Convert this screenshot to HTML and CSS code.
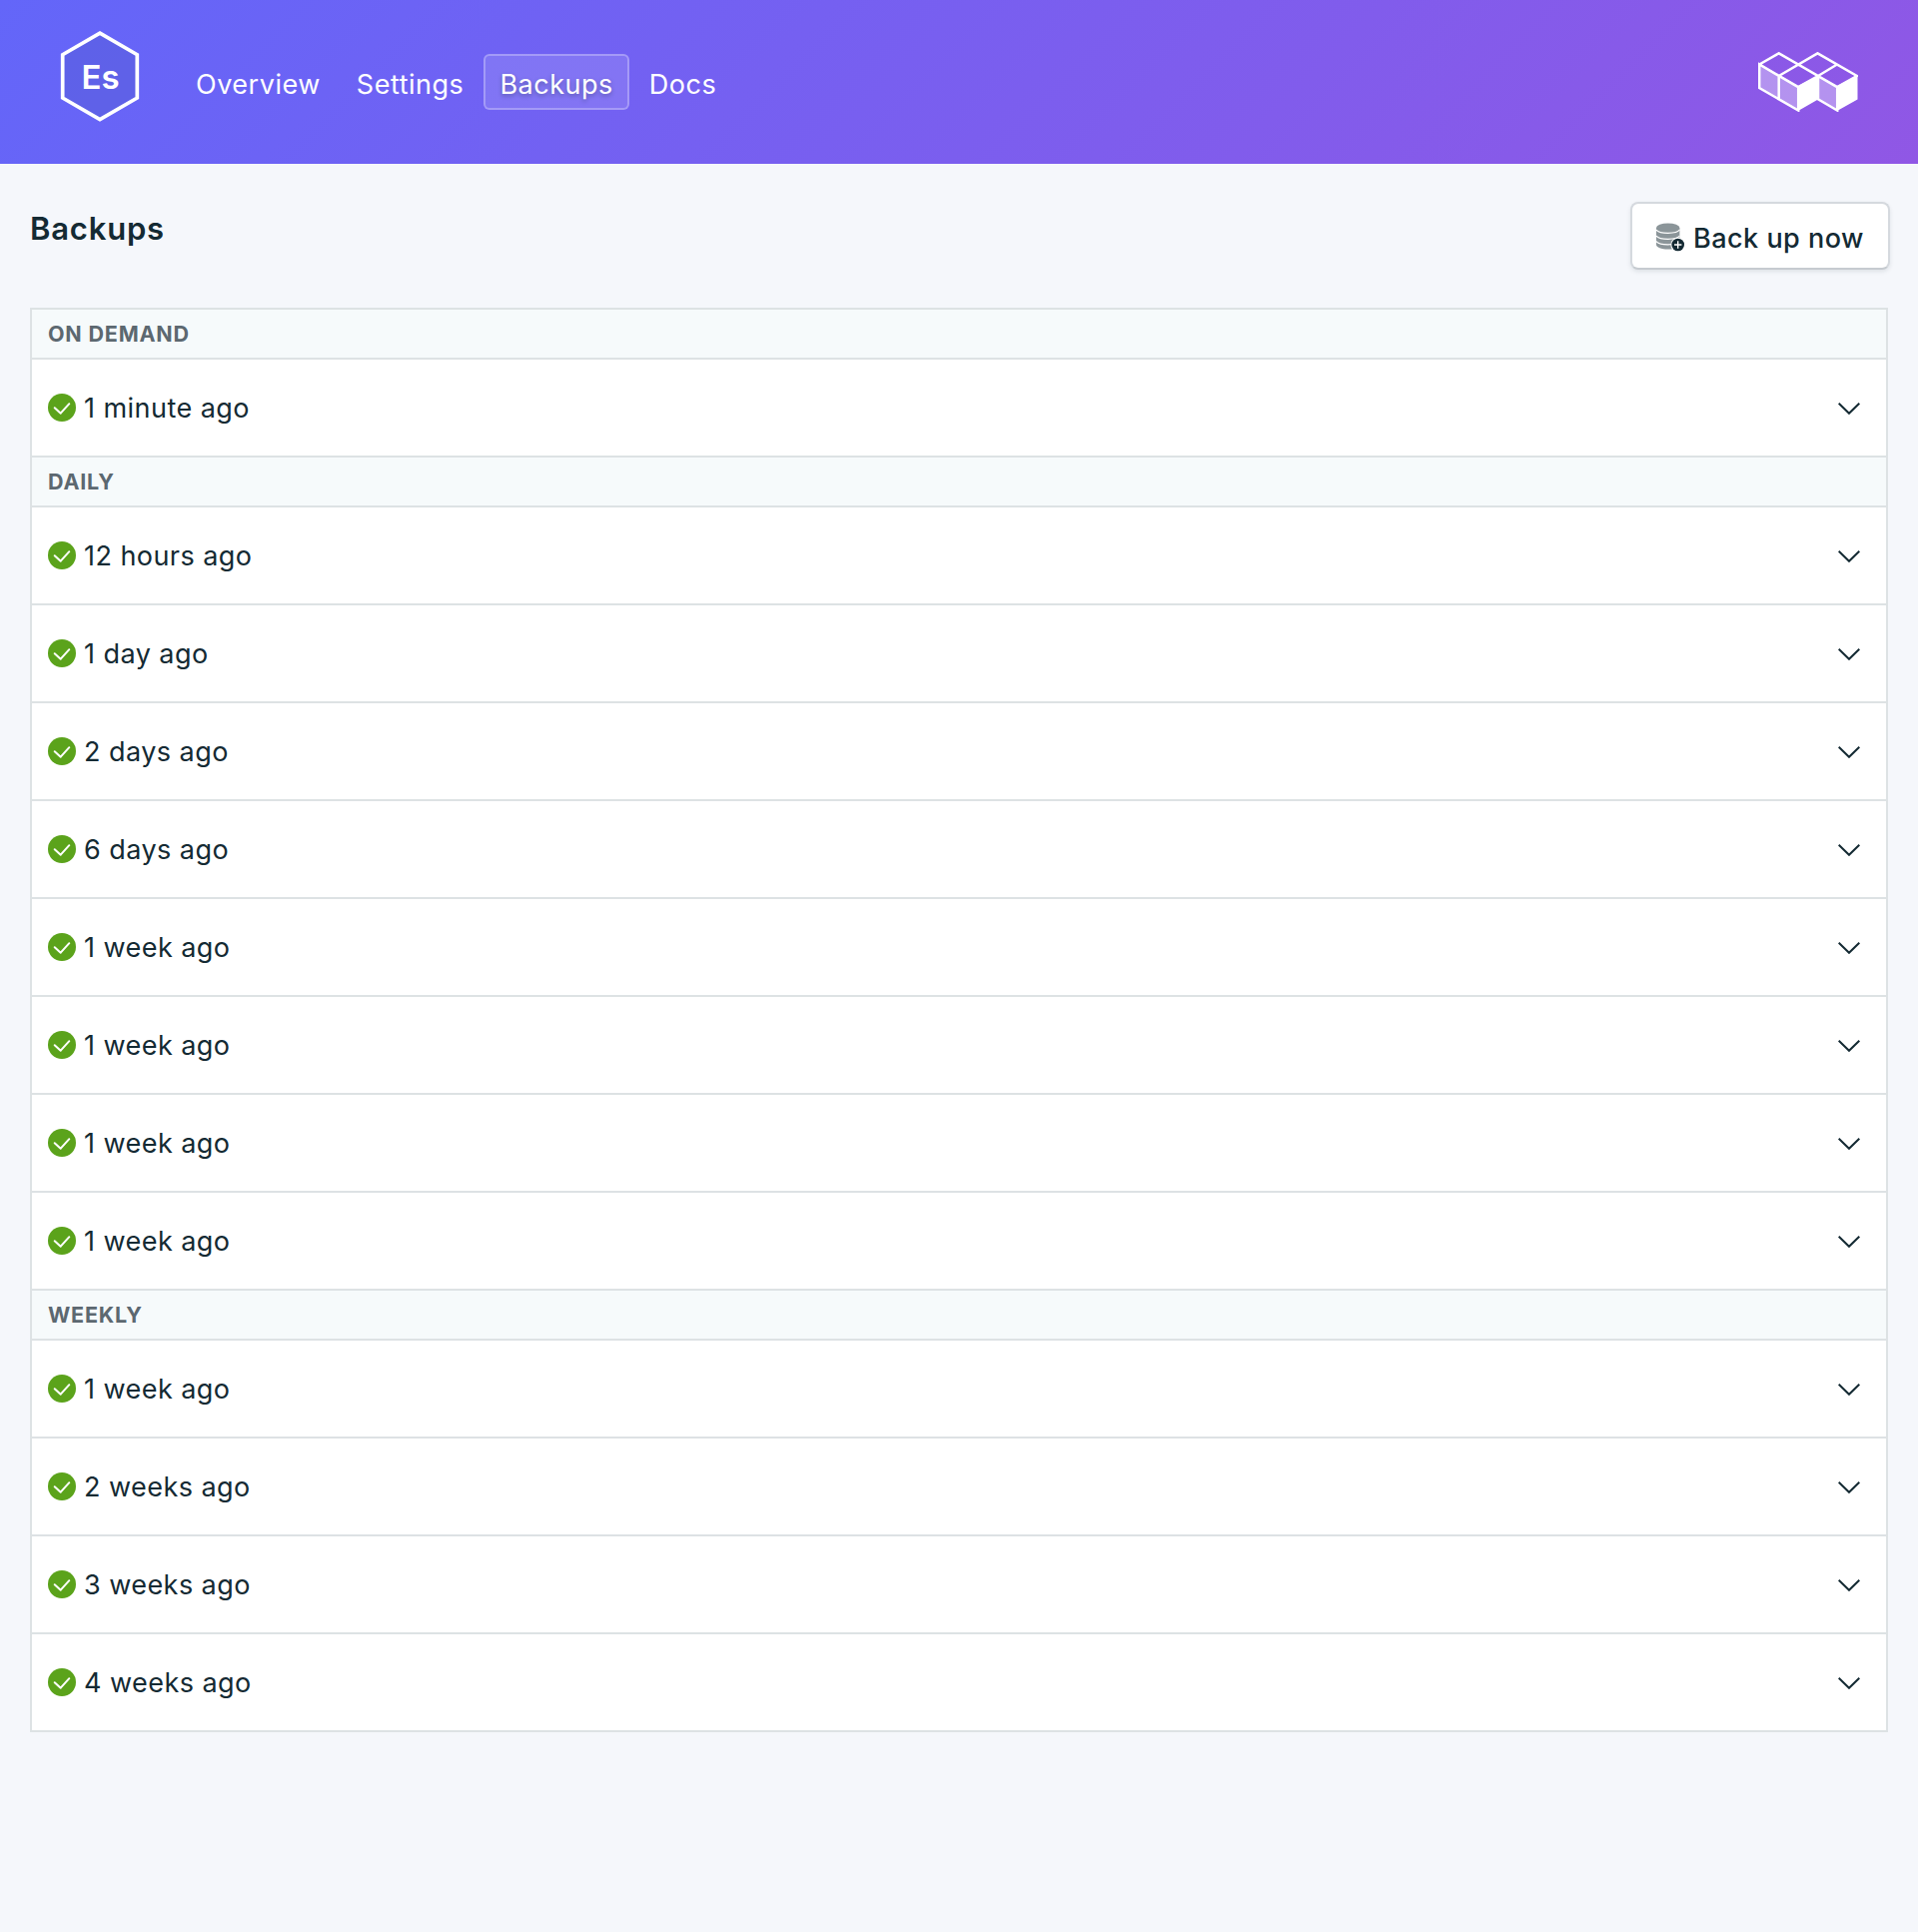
FILE: index.html
```
<!DOCTYPE html>
<html lang="en">
<head>
<meta charset="utf-8">
<title>Backups</title>
<link rel="stylesheet" href="styles.css">
</head>
<body>
<svg class="sprite" aria-hidden="true">
  <symbol id="check" viewBox="0 0 28 28">
    <circle cx="14" cy="14" r="14" fill="#5ba31b"/>
    <path d="M6.7 14.2 12.7 19.7 21.3 10.2" fill="none" stroke="#fff" stroke-width="2" stroke-linecap="round" stroke-linejoin="round"/>
  </symbol>
  <symbol id="chevron" viewBox="0 0 22 12">
    <path d="M.7.7 11 10.8 21.3.7" fill="none" stroke="#142a33" stroke-width="2"/>
  </symbol>
</svg>
<header class="topbar">
  <svg class="app-logo" width="80" height="94" viewBox="0 0 80 94">
    <path d="M40 3.200 77.300 24.700V68L40 89.500 2.700 68V24.700Z" fill="#5a5fe0" fill-opacity=".65" stroke="#fff" stroke-width="3.700"/>
    <text class="app-logo-text" x="40.500" y="58.500" text-anchor="middle">Es</text>
  </svg>
  <nav class="nav">
    <a class="nav-link">Overview</a>
    <a class="nav-link">Settings</a>
    <a class="nav-link nav-link-active">Backups</a>
    <a class="nav-link">Docs</a>
  </nav>
  <svg class="brand" width="100" height="60" viewBox="0 0 100 60">
    <path d="M1 12.5 21 24V47L1 36ZM21 24 40 34V59L21 47ZM60 24 79 34V59L60 47Z" fill="#fff" fill-opacity=".35"/>
    <path d="M40 34 60 24V47.5L40 59ZM79 34 99.5 24V47.5L79 59Z" fill="#fff"/>
    <path d="M1.2 12.5 20.7 1.3 60 24 40.2 35.2 1.2 12.5V36L40.2 58.5V35M20.7 24V47M20.7 24 59.5 1.3 98.8 24 79.2 35.2 40 12.5M60 24 79 12.5M60 24 79.2 35.2V58.5L60 47.3V24" fill="none" stroke="#fff" stroke-width="2.5"/>
  </svg>
</header>
<main class="page">
  <div class="page-head">
    <h1 class="page-title">Backups</h1>
    <button class="button" type="button">
      <svg class="button-icon" width="29" height="29" viewBox="0 0 29 29">
        <path d="M0 5V22C0 24.7 5.2 26.5 11.7 26.5S23.4 24.7 23.4 22V5Z" fill="#8b9599"/>
        <ellipse cx="11.7" cy="5" rx="11.7" ry="4.6" fill="#8b9599"/>
        <path d="M0 7C1.5 9.3 6 10.3 11.7 10.3S21.9 9.3 23.4 7M0 13C1.5 15.3 6 16.3 11.7 16.3S21.9 15.3 23.4 13M0 18.5C1.5 20.8 6 21.8 11.7 21.8S21.9 20.8 23.4 18.5" fill="none" stroke="#fff" stroke-width="1.3"/>
        <circle cx="21.7" cy="22" r="7.3" fill="#fff"/>
        <circle cx="21.7" cy="22" r="6.3" fill="#142a33"/>
        <path d="M21.7 18.3V25.7M18 22H25.4" stroke="#fff" stroke-width="1.4"/>
      </svg>
      <span class="button-label">Back up now</span>
    </button>
  </div>
  <section class="list">
    <h2 class="group">On demand</h2>
    <div class="row"><svg class="check"><use href="#check"/></svg><span class="age">1 minute ago</span><svg class="chevron"><use href="#chevron"/></svg></div>
    <h2 class="group">Daily</h2>
    <div class="row"><svg class="check"><use href="#check"/></svg><span class="age">12 hours ago</span><svg class="chevron"><use href="#chevron"/></svg></div>
    <div class="row"><svg class="check"><use href="#check"/></svg><span class="age">1 day ago</span><svg class="chevron"><use href="#chevron"/></svg></div>
    <div class="row"><svg class="check"><use href="#check"/></svg><span class="age">2 days ago</span><svg class="chevron"><use href="#chevron"/></svg></div>
    <div class="row"><svg class="check"><use href="#check"/></svg><span class="age">6 days ago</span><svg class="chevron"><use href="#chevron"/></svg></div>
    <div class="row"><svg class="check"><use href="#check"/></svg><span class="age">1 week ago</span><svg class="chevron"><use href="#chevron"/></svg></div>
    <div class="row"><svg class="check"><use href="#check"/></svg><span class="age">1 week ago</span><svg class="chevron"><use href="#chevron"/></svg></div>
    <div class="row"><svg class="check"><use href="#check"/></svg><span class="age">1 week ago</span><svg class="chevron"><use href="#chevron"/></svg></div>
    <div class="row"><svg class="check"><use href="#check"/></svg><span class="age">1 week ago</span><svg class="chevron"><use href="#chevron"/></svg></div>
    <h2 class="group">Weekly</h2>
    <div class="row"><svg class="check"><use href="#check"/></svg><span class="age">1 week ago</span><svg class="chevron"><use href="#chevron"/></svg></div>
    <div class="row"><svg class="check"><use href="#check"/></svg><span class="age">2 weeks ago</span><svg class="chevron"><use href="#chevron"/></svg></div>
    <div class="row"><svg class="check"><use href="#check"/></svg><span class="age">3 weeks ago</span><svg class="chevron"><use href="#chevron"/></svg></div>
    <div class="row"><svg class="check"><use href="#check"/></svg><span class="age">4 weeks ago</span><svg class="chevron"><use href="#chevron"/></svg></div>
  </section>
</main>
</body>
</html>
```
FILE: styles.css
```
* { box-sizing: border-box; }
body {
  margin: 0;
  min-height: 1934px;
  background: #f5f7fb;
  color: #142a33;
  font-family: Inter, sans-serif;
  font-size: 27px;
  letter-spacing: .45px;
}
.sprite { display: none; }
.topbar {
  display: flex;
  align-items: flex-start;
  height: 164px;
  padding: 30px 60px 0;
  background: linear-gradient(135deg, #6366f9 0%, #9057e5 100%);
}
.app-logo { flex: none; }
.app-logo-text {
  fill: #fff;
  font-size: 33px;
  font-weight: 600;
  letter-spacing: 0;
}
.nav {
  display: flex;
  gap: 4px;
  margin: 24px auto 0 40px;
}
.nav-link {
  height: 56px;
  padding: 2px 14px 0;
  border: 2px solid transparent;
  border-radius: 6px;
  color: #fff;
  letter-spacing: .52px;
  line-height: 54px;
}
.nav-link-active {
  background: rgba(255, 255, 255, .12);
  border-color: rgba(255, 255, 255, .28);
  text-shadow: 0 2px 4px rgba(20, 42, 51, .35);
}
.brand { margin-top: 22px; }
.page { padding: 38px 30px 0; }
.page-head {
  display: flex;
  justify-content: space-between;
  align-items: flex-start;
  height: 106px;
}
.page-title {
  margin: 7px 0 0;
  font-size: 31px;
  font-weight: 600;
  letter-spacing: .8px;
  line-height: 40px;
}
.button {
  display: flex;
  align-items: center;
  gap: 8px;
  height: 68px;
  margin-right: -2px;
  padding: 2px 24px 0 24px;
  border: 2px solid #d5d9de;
  border-bottom-color: #c6cbd0;
  border-radius: 8px;
  background: #fff;
  box-shadow: 0 2px 4px rgba(20, 42, 51, .1);
  color: inherit;
  font: 500 27px Inter, sans-serif;
  letter-spacing: .5px;
}
.button-label { padding-top: 2px; }
.list {
  border: 2px solid #dde2e4;
  border-bottom: 0;
}
.group {
  height: 50px;
  margin: 0;
  padding-left: 16px;
  border-bottom: 2px solid #dde2e4;
  background: #f6fafb;
  color: #5c6870;
  font-size: 21.5px;
  font-weight: 650;
  letter-spacing: .8px;
  line-height: 48px;
  text-transform: uppercase;
}
.row {
  display: flex;
  align-items: center;
  height: 98px;
  padding: 0 26px 0 16px;
  border-bottom: 2px solid #dde2e4;
  background: #fff;
}
.check { width: 28px; height: 28px; }
.age { flex: 1; margin-left: 8px; padding-top: 1px; }
.chevron { width: 22px; height: 12px; margin-top: 2px; }
```
